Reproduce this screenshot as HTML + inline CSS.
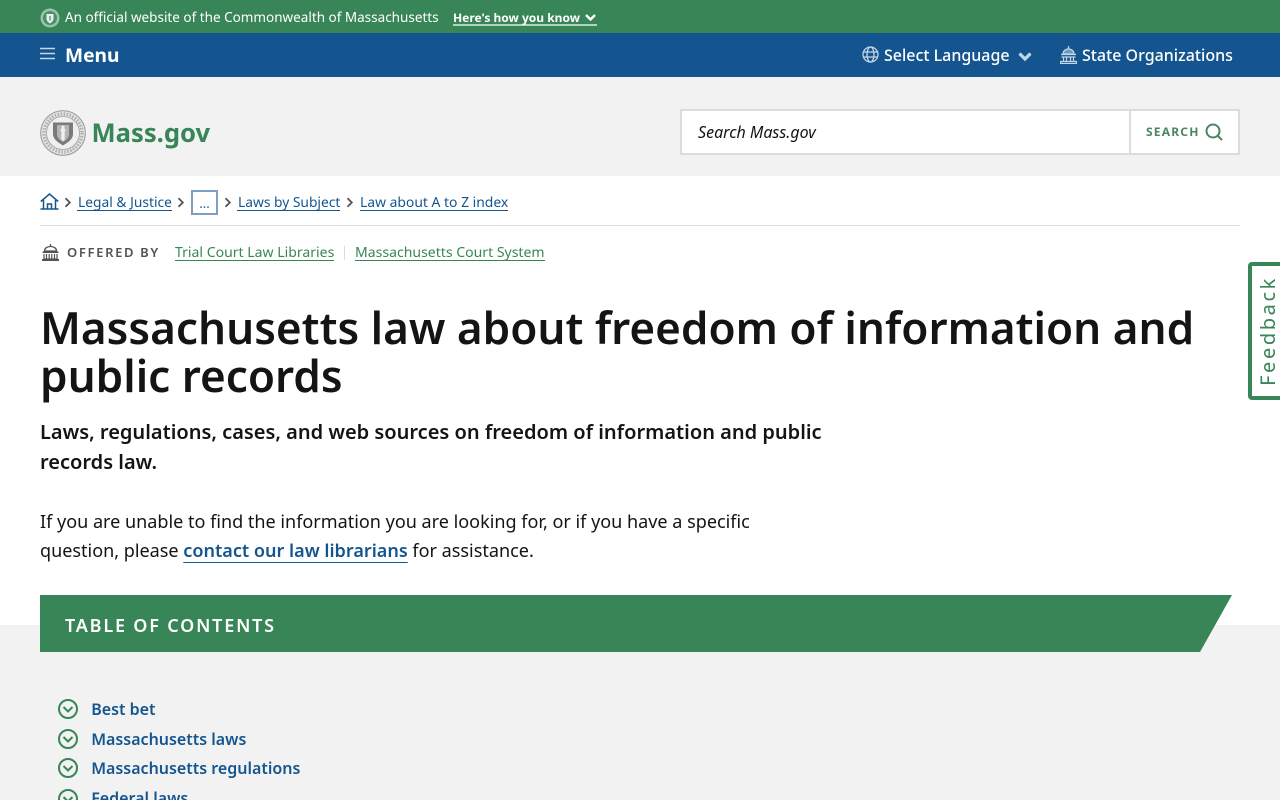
<!DOCTYPE html>
<html lang="en"><head><meta charset="utf-8"><title>Massachusetts law about freedom of information and public records | Mass.gov</title>
<style>
*{box-sizing:border-box}
html,body{margin:0;padding:0;width:1280px;height:800px;overflow:hidden;background:#fff}
body{font-family:"Noto Sans","Liberation Sans",sans-serif;color:#141414;position:relative}
.a{position:absolute;white-space:nowrap}
a{text-decoration:none;color:inherit}
.u{border-bottom:1px solid currentColor}
svg{position:absolute;display:block}
</style></head><body>
<div class="a" style="left:0;top:0;width:1280px;height:33px;background:#388557"></div>
<div class="a" style="left:0;top:33px;width:1280px;height:44px;background:#14558f"></div>
<div class="a" style="left:0;top:77px;width:1280px;height:99px;background:#f2f2f2"></div>
<div class="a" style="left:0;top:625px;width:1280px;height:175px;background:#f2f2f2"></div>

<svg style="left:40px;top:8px" width="20" height="20" viewBox="0 0 20 20"><circle cx="10" cy="10" r="9.500" fill="#9cc4ab"/><circle cx="10" cy="10" r="7" fill="#4a9068"/><path d="M6.500 6h7v5c0 2-2 3.500-3.500 4.500C8.500 14.500 6.500 13 6.500 11z" fill="#e8f0eb"/><path d="M10 8v4.500" stroke="#4a9068" stroke-width="1.300"/></svg>
<div class="a" style="left:65px;top:8px;font-size:13.500px;line-height:18px;color:#fff">An official website of the Commonwealth of Massachusetts</div>
<div class="a" style="left:453px;top:9px;height:17px;font-size:12px;line-height:17px;font-weight:700;color:#fff;border-bottom:2px solid #b5d2bf;width:144px">Here's how you know</div>
<svg style="left:584px;top:13px" width="13" height="10" viewBox="0 0 13 10"><path d="M2 2l4.500 4.500L11 2" fill="none" stroke="#fff" stroke-width="2.400"/></svg>

<svg style="left:40px;top:47px" width="15" height="14" viewBox="0 0 15 14"><path d="M0 1.500h15M0 6.500h15M0 11.500h15" stroke="#c5d6e6" stroke-width="1.400"/></svg>
<div class="a" style="left:65px;top:41px;font-size:19.200px;line-height:28px;font-weight:700;color:#fff">Menu</div>
<svg style="left:862px;top:46px" width="17" height="17" viewBox="0 0 17 17" fill="none" stroke="#c5d6e6" stroke-width="1.300"><circle cx="8.500" cy="8.500" r="7.500"/><ellipse cx="8.500" cy="8.500" rx="3.500" ry="7.500"/><path d="M1.500 6h14M1.500 11h14"/></svg>
<div class="a" style="left:884px;top:43px;font-size:16px;line-height:24px;font-weight:500;color:#fff">Select Language</div>
<svg style="left:1018px;top:52px" width="14" height="10" viewBox="0 0 14 10"><path d="M1.500 1.500L7 7l5.500-5.500" fill="none" stroke="#c5d6e6" stroke-width="3.200"/></svg>
<svg style="left:1060px;top:46px" width="17" height="18" viewBox="0 0 17 18" fill="none" stroke="#c5d6e6" stroke-width="1.200"><path d="M8.500 0v3M3 8c0-3 2.500-5 5.500-5s5.500 2 5.500 5z" fill="#6f97bb"/><path d="M1 8.500h15M1.500 11h14M3.500 11v4M6.500 11v4M10.500 11v4M13.500 11v4M.5 15.500h16v2H.5z"/></svg>
<div class="a" style="left:1082px;top:43px;font-size:16px;line-height:24px;font-weight:500;color:#fff">State Organizations</div>

<svg style="left:40px;top:110px" width="46" height="46" viewBox="0 0 46 46"><circle cx="23" cy="23" r="22.300" fill="#e4e4e4" stroke="#9a9a9a"/><circle cx="23" cy="23" r="19" fill="none" stroke="#b0b0b0" stroke-width="3.500" stroke-dasharray="1.500 1.500"/><circle cx="23" cy="23" r="16.500" fill="#efefef" stroke="#a0a0a0" stroke-width=".8"/><path d="M13 12.500h20v11.500c0 5.500-5.500 8.500-10 11.500-4.500-3-10-6-10-11.500z" fill="#7a7a7a"/><path d="M17 15h12v9.500c0 3.500-3 5.500-6 7.500-3-2-6-4-6-7.500z" fill="#b4b4b4"/><path d="M23 15.500c1.300 0 1.800 1.300 1.300 2.500l1.400 2.500-1 1v8l-1.700 1.700-1.700-1.700v-8l-1-1 1.400-2.500c-.5-1.200 0-2.500 1.300-2.500z" fill="#f0f0f0"/></svg>
<div class="a" style="left:91.500px;top:114px;font-size:25.600px;line-height:38px;font-weight:700;color:#388557">Mass.gov</div>

<div class="a" style="left:680px;top:109px;width:560px;height:46px;background:#fff;border:2px solid #dcdcdc"></div>
<div class="a" style="left:1129px;top:110px;width:2px;height:44px;background:#dcdcdc"></div>
<div class="a" style="left:698px;top:121px;font-size:16px;line-height:22px;font-style:italic;color:#141414">Search Mass.gov</div>
<div class="a" style="left:1146px;top:123px;font-size:12px;line-height:17px;font-weight:700;letter-spacing:1.200px;color:#4c8563">SEARCH</div>
<svg style="left:1205px;top:123px" width="18" height="18" viewBox="0 0 18 18" fill="none" stroke="#4c8563" stroke-width="2"><circle cx="8" cy="8" r="6.500"/><path d="M12.500 12.500l4.500 4.500"/></svg>

<svg style="left:40px;top:193px" width="19" height="17" viewBox="0 0 19 17" fill="none" stroke="#14558f" stroke-width="1.500"><path d="M.8 8.500L9.500 1l8.700 7.500M3.500 7v9h12V7M7.500 16v-5h4v5M.5 16h18"/></svg>
<svg style="left:64px;top:197px" width="8" height="11" viewBox="0 0 8 11"><path d="M1.500 1.200L5.800 5.500 1.500 9.800" fill="none" stroke="#535353" stroke-width="1.800"/></svg>
<a class="a u" style="left:77px;top:194px;height:17px;font-size:13.800px;line-height:17px;color:#14558f;padding:0 0 0 1px">Legal &amp; Justice</a>
<svg style="left:177px;top:197px" width="8" height="11" viewBox="0 0 8 11"><path d="M1.500 1.200L5.800 5.500 1.500 9.800" fill="none" stroke="#535353" stroke-width="1.800"/></svg>
<div class="a" style="left:191px;top:190px;width:27px;height:25px;border:2px solid #7f9fc0;font-size:13px;line-height:23px;text-align:center;color:#14558f">...</div>
<svg style="left:224px;top:197px" width="8" height="11" viewBox="0 0 8 11"><path d="M1.500 1.200L5.800 5.500 1.500 9.800" fill="none" stroke="#535353" stroke-width="1.800"/></svg>
<a class="a u" style="left:237px;top:194px;height:17px;font-size:13.800px;line-height:17px;color:#14558f;padding:0 0 0 1px">Laws by Subject</a>
<svg style="left:346px;top:197px" width="8" height="11" viewBox="0 0 8 11"><path d="M1.500 1.200L5.800 5.500 1.500 9.800" fill="none" stroke="#535353" stroke-width="1.800"/></svg>
<a class="a u" style="left:360px;top:194px;height:17px;font-size:13.900px;line-height:17px;color:#14558f">Law about A to Z index</a>
<div class="a" style="left:40px;top:225px;width:1200px;height:1px;background:#dcdcdc"></div>

<svg style="left:42px;top:244px" width="17" height="17" viewBox="0 0 17 17"><path d="M8.500 0v2.500M2.500 7c0-2.800 2.700-4.500 6-4.500s6 1.700 6 4.500z" fill="none" stroke="#535353" stroke-width="1.300"/><path d="M.5 7.500h16v1.500H.5zM0 15h17v2H0z" fill="#535353"/><path d="M2 10v5h13v-5M4.500 10v5M7.200 10v5M9.800 10v5M12.500 10v5" fill="none" stroke="#535353" stroke-width="1.200"/></svg>
<div class="a" style="left:67px;top:243px;font-size:13px;line-height:18px;font-weight:600;letter-spacing:1.650px;color:#535353">OFFERED BY</div>
<a class="a u" style="left:175px;top:244px;height:17px;font-size:14.050px;line-height:17px;color:#388557">Trial Court Law Libraries</a>
<div class="a" style="left:344px;top:246px;width:1px;height:14px;background:#dcdcdc"></div>
<a class="a u" style="left:355px;top:244px;height:17px;font-size:14.050px;line-height:17px;color:#388557">Massachusetts Court System</a>

<div class="a" style="left:1248px;top:262px;width:40px;height:138px;background:#fff;border:4px solid #388557;border-radius:4px"></div>
<div class="a" style="left:1268px;top:330.500px;font-size:20px;line-height:24px;letter-spacing:2.600px;color:#388557;transform:translate(-50%,-50%) rotate(-90deg)">Feedback</div>

<div class="a" style="left:40px;top:303px;font-size:44.050px;line-height:48px;font-weight:600;color:#141414">Massachusetts law about freedom of information and<br>public records</div>
<div class="a" style="left:40px;top:417px;font-size:20.020px;line-height:30px;font-weight:600;color:#141414">Laws, regulations, cases, and web sources on freedom of information and public<br>records law.</div>
<div class="a" style="left:40px;top:508px;font-size:18.050px;line-height:29px;color:#141414">If you are unable to find the information you are looking for, or if you have a specific<br>question, please <a style="color:#14558f;font-weight:600;text-decoration:underline;text-decoration-thickness:1px;text-underline-offset:5px">contact our law librarians</a> for assistance.</div>

<svg style="left:40px;top:595px" width="1192" height="57" viewBox="0 0 1192 57"><path d="M0 0H1192L1160 57H0z" fill="#388557"/></svg>
<div class="a" style="left:65px;top:613px;font-size:18px;line-height:27px;font-weight:600;letter-spacing:1.800px;color:#fff">TABLE OF CONTENTS</div>

<svg style="left:58px;top:699px" width="20" height="20" viewBox="0 0 20 20" fill="none" stroke="#388557" stroke-width="2"><circle cx="10" cy="10" r="9"/><path d="M5.500 8l4.500 4.500L14.500 8"/></svg>
<a class="a" style="left:91.200px;top:697px;font-size:16px;line-height:24px;font-weight:600;color:#14558f">Best bet</a>
<svg style="left:58px;top:729px" width="20" height="20" viewBox="0 0 20 20" fill="none" stroke="#388557" stroke-width="2"><circle cx="10" cy="10" r="9"/><path d="M5.500 8l4.500 4.500L14.500 8"/></svg>
<a class="a" style="left:91.200px;top:727px;font-size:16px;line-height:24px;font-weight:600;color:#14558f">Massachusetts laws</a>
<svg style="left:58px;top:758px" width="20" height="20" viewBox="0 0 20 20" fill="none" stroke="#388557" stroke-width="2"><circle cx="10" cy="10" r="9"/><path d="M5.500 8l4.500 4.500L14.500 8"/></svg>
<a class="a" style="left:91.200px;top:756px;font-size:16px;line-height:24px;font-weight:600;color:#14558f">Massachusetts regulations</a>
<svg style="left:58px;top:789px" width="20" height="20" viewBox="0 0 20 20" fill="none" stroke="#388557" stroke-width="2"><circle cx="10" cy="10" r="9"/><path d="M5.500 8l4.500 4.500L14.500 8"/></svg>
<a class="a" style="left:91.200px;top:786px;font-size:16px;line-height:24px;font-weight:600;color:#14558f">Federal laws</a>
</body></html>
